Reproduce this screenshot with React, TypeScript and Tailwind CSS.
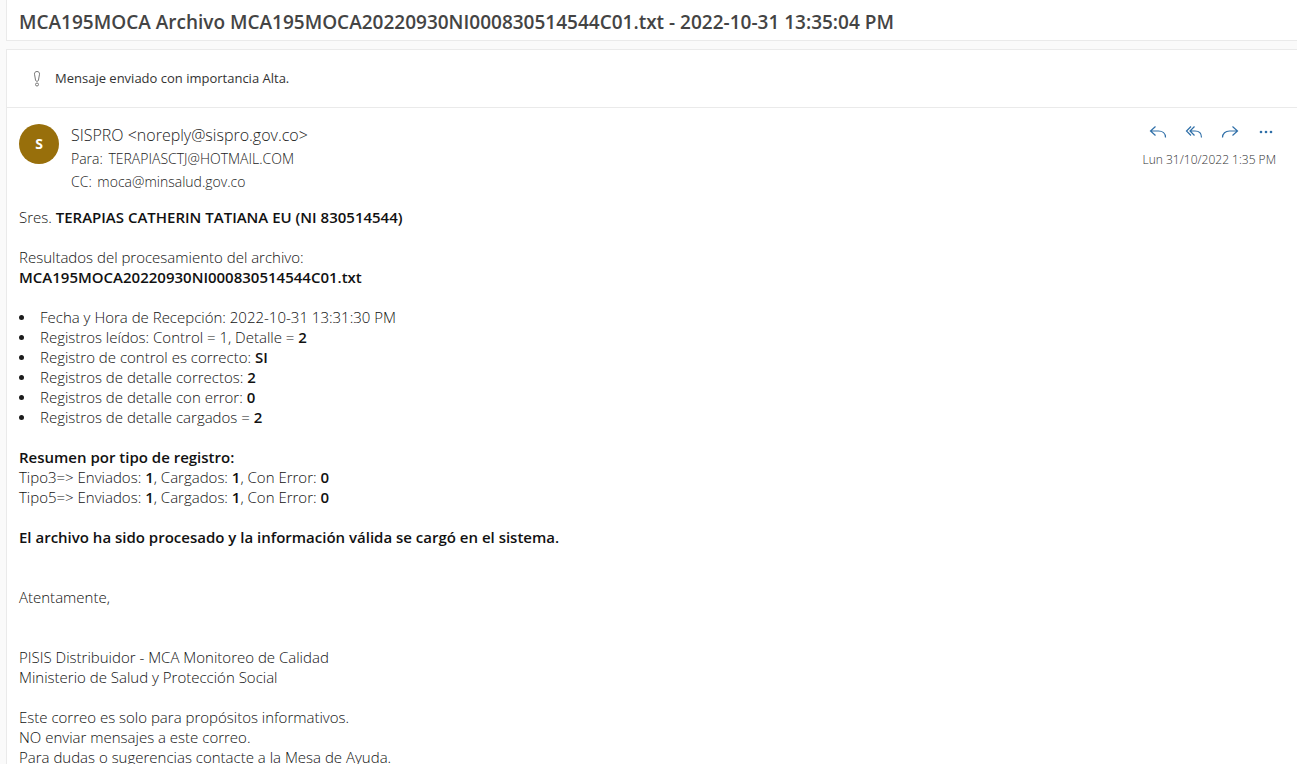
import React from "react";

const summary: { label: string; value?: string }[] = [
  { label: "Fecha y Hora de Recepción: 2022-10-31 13:31:30 PM" },
  { label: "Registros leídos: Control = 1, Detalle =", value: "2" },
  { label: "Registro de control es correcto:", value: "SI" },
  { label: "Registros de detalle correctos:", value: "2" },
  { label: "Registros de detalle con error:", value: "0" },
  { label: "Registros de detalle cargados =", value: "2" },
];

const types = ["Tipo3", "Tipo5"];

function ActionButton({ label, children }: { label: string; children: React.ReactNode }) {
  return (
    <button type="button" aria-label={label} className="flex h-4 w-5 items-center justify-center text-[#2f6fa8]">
      <svg
        viewBox="0 0 20 16"
        className="h-4 w-5"
        fill="none"
        stroke="currentColor"
        strokeWidth="1.2"
        aria-hidden="true"
      >
        {children}
      </svg>
    </button>
  );
}

function Actions() {
  return (
    <div className="flex gap-4">
      <ActionButton label="Responder">
        <path d="M7.500 2.500 2.500 7l5 4.500M2.500 7h8c4 0 7 2.500 7 6.500" />
      </ActionButton>
      <ActionButton label="Responder a todos">
        <path d="M7 2.500 2.500 7 7 11.500M10.500 2.500 6 7l4.500 4.500M6 7h5c4 0 6.500 2.500 6.500 6.500" />
      </ActionButton>
      <ActionButton label="Reenviar">
        <path d="M12.500 2.500l5 4.500-5 4.500M17.500 7h-8c-4 0-7 2.500-7 6.500" />
      </ActionButton>
      <ActionButton label="Más acciones">
        <g fill="currentColor" stroke="none">
          <circle cx="5" cy="8" r="1.300" />
          <circle cx="10" cy="8" r="1.300" />
          <circle cx="15" cy="8" r="1.300" />
        </g>
      </ActionButton>
    </div>
  );
}

function MessageHeader() {
  return (
    <header className="flex items-start gap-3 pt-4 pr-[21px] pl-3">
      <div className="flex size-10 shrink-0 items-center justify-center rounded-full bg-[#986f0b] text-sm font-bold text-white">
        S
      </div>
      <div className="flex-1 text-sm leading-[23px] font-light text-[#222222]">
        <p className="text-base leading-[23px]">SISPRO &lt;noreply@sispro.gov.co&gt;</p>
        <p>
          Para: <span className="ml-[2px]">TERAPIASCTJ@HOTMAIL.COM</span>
        </p>
        <p>
          CC: <span className="ml-[2px]">moca@minsalud.gov.co</span>
        </p>
      </div>
      <div className="flex flex-col items-end gap-3">
        <Actions />
        <time dateTime="2022-10-31T13:35" className="text-xs leading-4 font-light text-[#333333]">
          Lun 31/10/2022 1:35 PM
        </time>
      </div>
    </header>
  );
}

function MessageBody() {
  return (
    <div className="flex flex-col gap-5 px-3 pt-[14px] pb-5 text-[15px] leading-5 font-light text-[#111111] [&_strong]:font-semibold [&_strong]:text-[#111111]">
      <p>
        Sres. <strong>TERAPIAS CATHERIN TATIANA EU (NI 830514544)</strong>
      </p>
      <p>
        Resultados del procesamiento del archivo:
        <br />
        <strong>MCA195MOCA20220930NI000830514544C01.txt</strong>
      </p>
      <ul>
        {summary.map((item) => (
          <li key={item.label} className="flex items-center">
            <span className="mr-4 size-[5px] rounded-full bg-[#1c1c1c]" />
            <span>
              {item.label} {item.value && <strong>{item.value}</strong>}
            </span>
          </li>
        ))}
      </ul>
      <div>
        <p>
          <strong>Resumen por tipo de registro:</strong>
        </p>
        {types.map((type) => (
          <p key={type}>
            {type}=&gt; Enviados: <strong>1</strong>, Cargados: <strong>1</strong>, Con Error: <strong>0</strong>
          </p>
        ))}
      </div>
      <p>
        <strong>El archivo ha sido procesado y la información válida se cargó en el sistema.</strong>
      </p>
      <p className="pt-5">Atentamente,</p>
      <p className="pt-5">
        PISIS Distribuidor - MCA Monitoreo de Calidad
        <br />
        Ministerio de Salud y Protección Social
      </p>
      <p>
        Este correo es solo para propósitos informativos.
        <br />
        NO enviar mensajes a este correo.
        <br />
        Para dudas o sugerencias contacte a la Mesa de Ayuda.
      </p>
    </div>
  );
}

export default function App() {
  return (
    <main className="flex h-screen flex-col gap-2 overflow-hidden bg-[#fafafa] pl-[6px] font-['Open_Sans','Noto_Sans',sans-serif]">
      <div className="border-b border-l border-[#eaeaea] bg-white px-3 pt-2 pb-1">
        <h1 className="text-[19px] leading-7 font-semibold text-[#444444]">
          MCA195MOCA Archivo MCA195MOCA20220930NI000830514544C01.txt - 2022-10-31 13:35:04 PM
        </h1>
      </div>
      <article className="flex-1 border-t border-l border-[#eaeaea] bg-white">
        <div className="flex items-center gap-3 border-b border-[#eaeaea] px-6 py-[18px] text-[13px] leading-[21px] text-[#333333]">
          <svg viewBox="0 0 12 18" className="h-[18px] w-3" fill="none" stroke="#777777" aria-hidden="true">
            <path d="M6 1.500c-1.700 0-2.700 1.100-2.500 2.700l1.100 6.300c.2 1 2.600 1 2.800 0l1.100-6.300C8.700 2.600 7.700 1.500 6 1.500Z" />
            <circle cx="6" cy="14.500" r="1.500" />
          </svg>
          <p>Mensaje enviado con importancia Alta.</p>
        </div>
        <MessageHeader />
        <MessageBody />
      </article>
    </main>
  );
}
